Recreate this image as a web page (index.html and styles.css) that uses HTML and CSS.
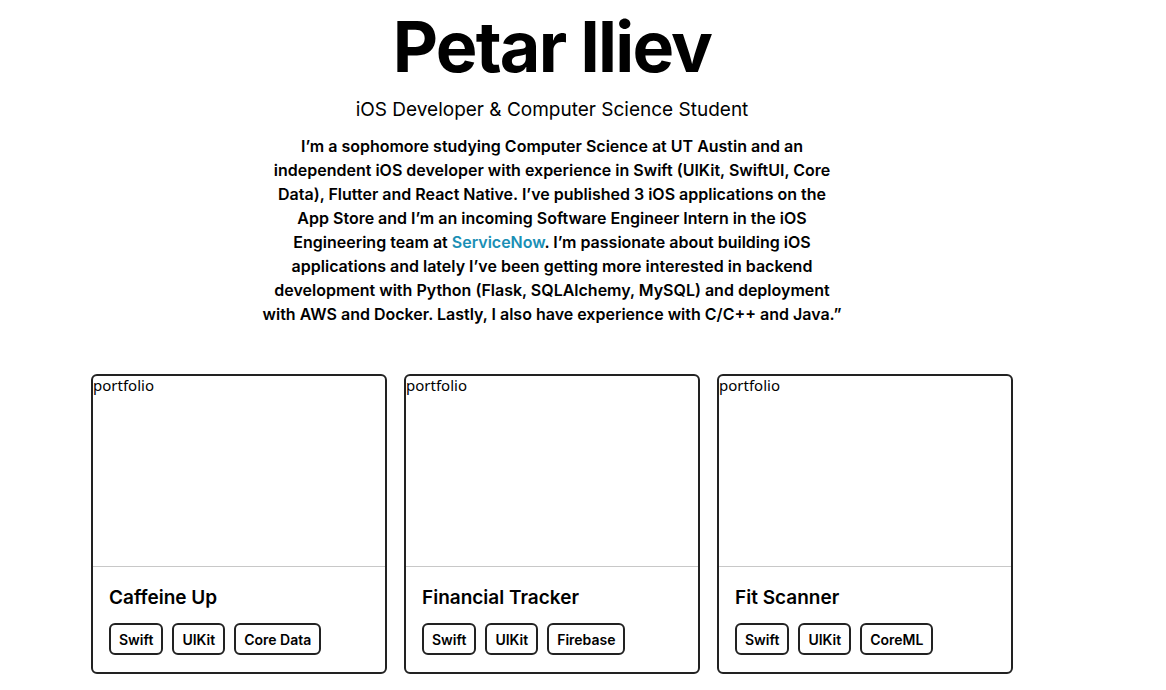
FILE: index.html
```html
<!DOCTYPE html>
<html>
<head>
<meta charset="utf-8">
<link rel="stylesheet" href="styles.css">
</head>
<body>
<div class="page">
  <header class="intro">
    <h1 class="name">Petar Iliev</h1>
    <h2 class="role">iOS Developer &amp; Computer Science Student</h2>
    <p class="bio">I’m a sophomore studying Computer Science at UT Austin and an independent iOS developer with experience in Swift (UIKit, SwiftUI, Core Data), Flutter and React Native. I’ve published 3 iOS applications on the App Store and I’m an incoming Software Engineer Intern in the iOS Engineering team at <a class="link" href="#">ServiceNow</a>. I’m passionate about building iOS applications and lately I’ve been getting more interested in backend development with Python (Flask, SQLAlchemy, MySQL) and deployment with AWS and Docker. Lastly, I also have experience with C/C++ and Java.”</p>
  </header>
  <section class="cards">
    <article class="card">
      <div class="thumb">portfolio</div>
      <div class="body">
        <h3 class="title">Caffeine Up</h3>
        <div class="tags"><span class="tag">Swift</span><span class="tag">UIKit</span><span class="tag">Core Data</span></div>
      </div>
    </article>
    <article class="card">
      <div class="thumb">portfolio</div>
      <div class="body">
        <h3 class="title">Financial Tracker</h3>
        <div class="tags"><span class="tag">Swift</span><span class="tag">UIKit</span><span class="tag">Firebase</span></div>
      </div>
    </article>
    <article class="card">
      <div class="thumb">portfolio</div>
      <div class="body">
        <h3 class="title">Fit Scanner</h3>
        <div class="tags"><span class="tag">Swift</span><span class="tag">UIKit</span><span class="tag">CoreML</span></div>
      </div>
    </article>
  </section>
</div>
</body>
</html>
```
FILE: styles.css
```css
html, body {
  margin: 0;
  padding: 0;
  background: #fff;
}
body {
  font-family: Inter, "Liberation Sans", sans-serif;
  color: #000;
}
.page {
  width: 1104px;
  display: flex;
  flex-direction: column;
  align-items: center;
}
.intro {
  display: flex;
  flex-direction: column;
  align-items: center;
  text-align: center;
}
.name {
  margin: 3px 0 0;
  font-size: 70px;
  font-weight: 700;
  letter-spacing: -1.8px;
  line-height: 88px;
}
.role {
  margin: 5px 0 0;
  font-size: 19px;
  font-weight: 400;
  line-height: 28px;
}
.bio {
  margin: 10px 0 0;
  width: 580px;
  font-size: 16px;
  font-weight: 600;
  line-height: 24px;
}
.link {
  color: #1a8fb5;
  text-decoration: none;
}
.cards {
  margin-top: 48px;
  display: grid;
  grid-template-columns: repeat(3, 296px);
  gap: 17px;
}
.card {
  border: 2px solid #222;
  border-radius: 6px;
  height: 300px;
  box-sizing: border-box;
  display: flex;
  flex-direction: column;
  overflow: hidden;
}
.thumb {
  height: 190px;
  flex-shrink: 0;
  border-bottom: 1px solid #c8c8c8;
  font-family: "Noto Sans", "Open Sans", sans-serif;
  font-size: 15px;
  line-height: 18px;
}
.body {
  padding: 18px 16px 0;
}
.title {
  margin: 0;
  font-size: 19px;
  font-weight: 600;
  line-height: 26px;
}
.tags {
  margin-top: 12px;
  display: flex;
  gap: 9px;
}
.tag {
  border: 2px solid #222;
  border-radius: 6px;
  padding: 0 8px;
  height: 32px;
  flex-shrink: 0;
  box-sizing: border-box;
  display: flex;
  align-items: center;
  font-size: 14px;
  font-weight: 600;
}
```
